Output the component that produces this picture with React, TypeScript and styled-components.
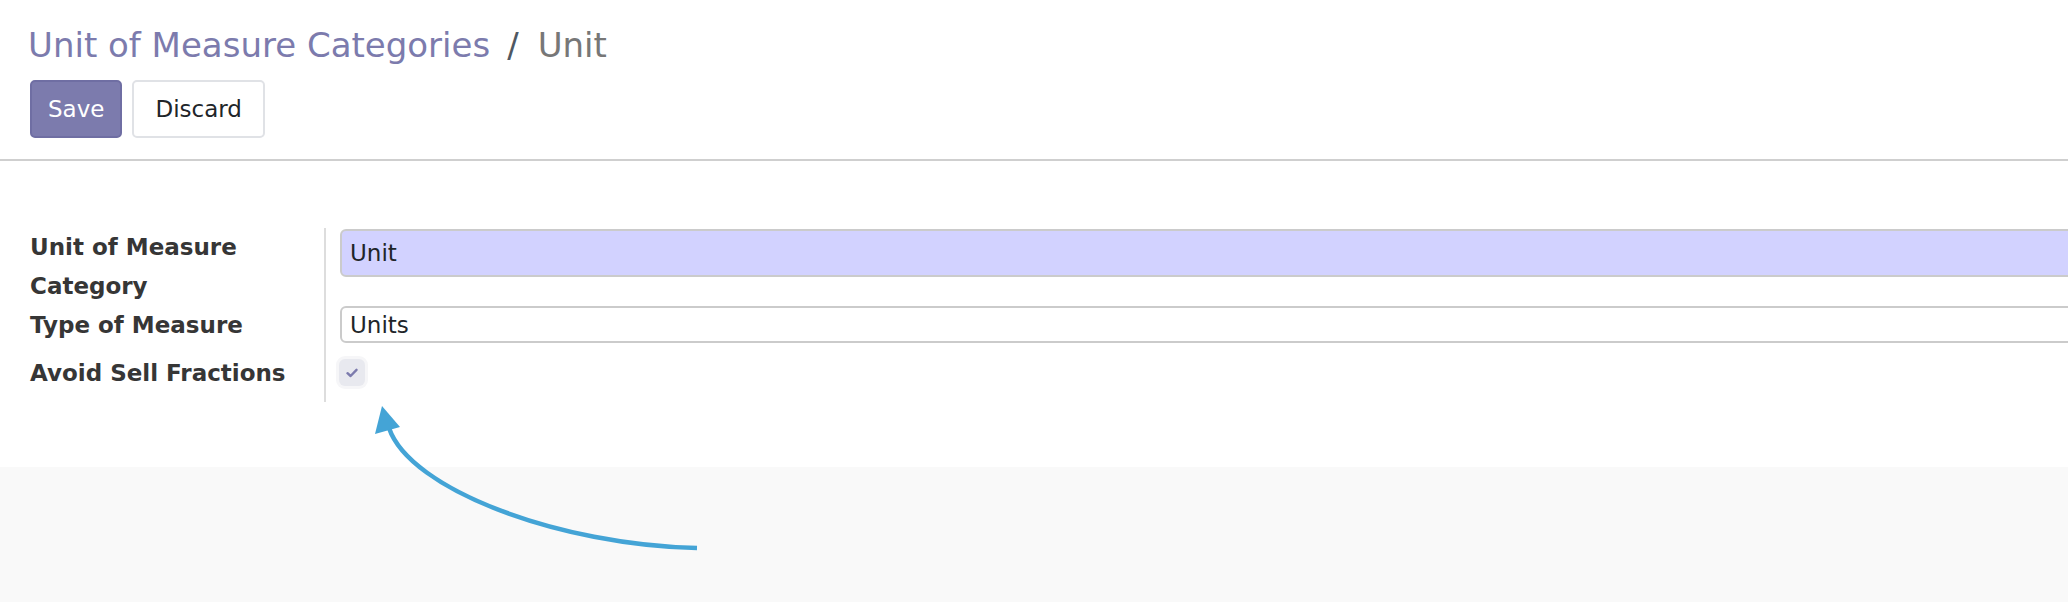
import React from "react";
import styled, { createGlobalStyle } from "styled-components";

const GlobalStyle = createGlobalStyle`
  html, body {
    margin: 0;
    padding: 0;
    background: #f9f9f9;
    overflow: hidden;
  }
  body {
    font-family: "DejaVu Sans", "Liberation Sans", sans-serif;
    color: #212529;
  }
`;

const Page = styled.div`
  position: relative;
  width: 2068px;
  height: 602px;
  overflow: hidden;
`;

const ControlPanel = styled.div`
  background: #fff;
  padding: 25px 0 21px 30px;
  border-bottom: 2px solid #cfcfcf;
`;

const Breadcrumb = styled.div`
  display: flex;
  align-items: baseline;
  font-size: 34px;
  line-height: 40px;
  margin-left: -2px;
`;

const Crumb = styled.span<{ $active?: boolean }>`
  color: ${(p) => (p.$active ? "#777777" : "#7C7BAD")};
`;

const Separator = styled.span`
  color: #4f5862;
  margin: 0 19px 0 17px;
`;

const Buttons = styled.div`
  display: flex;
  gap: 10px;
  margin-top: 15px;
`;

const Button = styled.button<{ $primary?: boolean }>`
  display: flex;
  align-items: center;
  justify-content: center;
  height: 58px;
  padding: 0 ${(p) => (p.$primary ? 16 : 21)}px;
  border-radius: 5px;
  font-family: "DejaVu Sans", sans-serif;
  font-size: 23px;
  cursor: pointer;
  background: ${(p) => (p.$primary ? "#7C7BAD" : "#fff")};
  color: ${(p) => (p.$primary ? "#fff" : "#212529")};
  border: 2px solid ${(p) => (p.$primary ? "#6f6ea3" : "#e0e2e6")};
`;

const Sheet = styled.div`
  background: #fff;
  padding: 67px 0 65px 30px;
`;

const Group = styled.div`
  display: grid;
  grid-template-columns: 296px 1fr;
`;

const Label = styled.div<{ $last?: boolean }>`
  font-size: 23px;
  font-weight: bold;
  line-height: 39px;
  color: #363636;
  border-right: 2px solid #dddddd;
  padding-right: 20px;
  padding-bottom: ${(p) => (p.$last ? 9 : 0)}px;
`;

const Field = styled.div<{ $minHeight?: number }>`
  padding-left: 14px;
  min-height: ${(p) => p.$minHeight || 0}px;
`;

const Input = styled.input<{ $required?: boolean; $height: number; $offset?: number }>`
  display: block;
  box-sizing: border-box;
  width: calc(100% + 20px);
  height: ${(p) => p.$height}px;
  margin-top: ${(p) => p.$offset ?? 1}px;
  padding: 0 0 0 8px;
  border: 2px solid #cbcbcb;
  border-radius: 6px;
  background: ${(p) => (p.$required ? "#d2d2ff" : "#fff")};
  font-family: "DejaVu Sans", sans-serif;
  font-size: 23px;
  color: #212529;
  outline: none;
`;

const CheckBox = styled.span`
  display: flex;
  align-items: center;
  justify-content: center;
  width: 26px;
  height: 27px;
  margin: 5px 0 0 -1px;
  border-radius: 6px;
  background: #e8e9ef;
  box-shadow: 0 0 0 3px #f6f6f8;
`;

const Arrow = styled.svg`
  position: absolute;
  left: 0;
  top: 0;
  pointer-events: none;
`;

export default function App() {
  return (
    <Page>
      <GlobalStyle />
      <ControlPanel>
        <Breadcrumb>
          <Crumb>Unit of Measure Categories</Crumb>
          <Separator>/</Separator>
          <Crumb $active>Unit</Crumb>
        </Breadcrumb>
        <Buttons>
          <Button $primary>Save</Button>
          <Button>Discard</Button>
        </Buttons>
      </ControlPanel>
      <Sheet>
        <Group>
          <Label>
            Unit of Measure
            <br />
            Category
          </Label>
          <Field>
            <Input $required $height={48} readOnly value="Unit" />
          </Field>
          <Label>Type of Measure</Label>
          <Field $minHeight={48}>
            <Input $height={37} $offset={0} readOnly value="Units" />
          </Field>
          <Label $last>Avoid Sell Fractions</Label>
          <Field>
            <CheckBox>
              <svg width="12" height="10" viewBox="0 0 12 10">
                <path
                  d="M1.5 5.2 L4.6 8 L10.5 1.8"
                  fill="none"
                  stroke="#7C7BAD"
                  strokeWidth="2.4"
                  strokeLinecap="round"
                  strokeLinejoin="round"
                />
              </svg>
            </CheckBox>
          </Field>
        </Group>
      </Sheet>
      <Arrow width="2068" height="602" viewBox="0 0 2068 602">
        <path
          d="M697 548 C560 545 410 490 389 428"
          fill="none"
          stroke="#44a4d6"
          strokeWidth="4.5"
        />
        <polygon points="382,406 375,434 400,427" fill="#44a4d6" />
      </Arrow>
    </Page>
  );
}
